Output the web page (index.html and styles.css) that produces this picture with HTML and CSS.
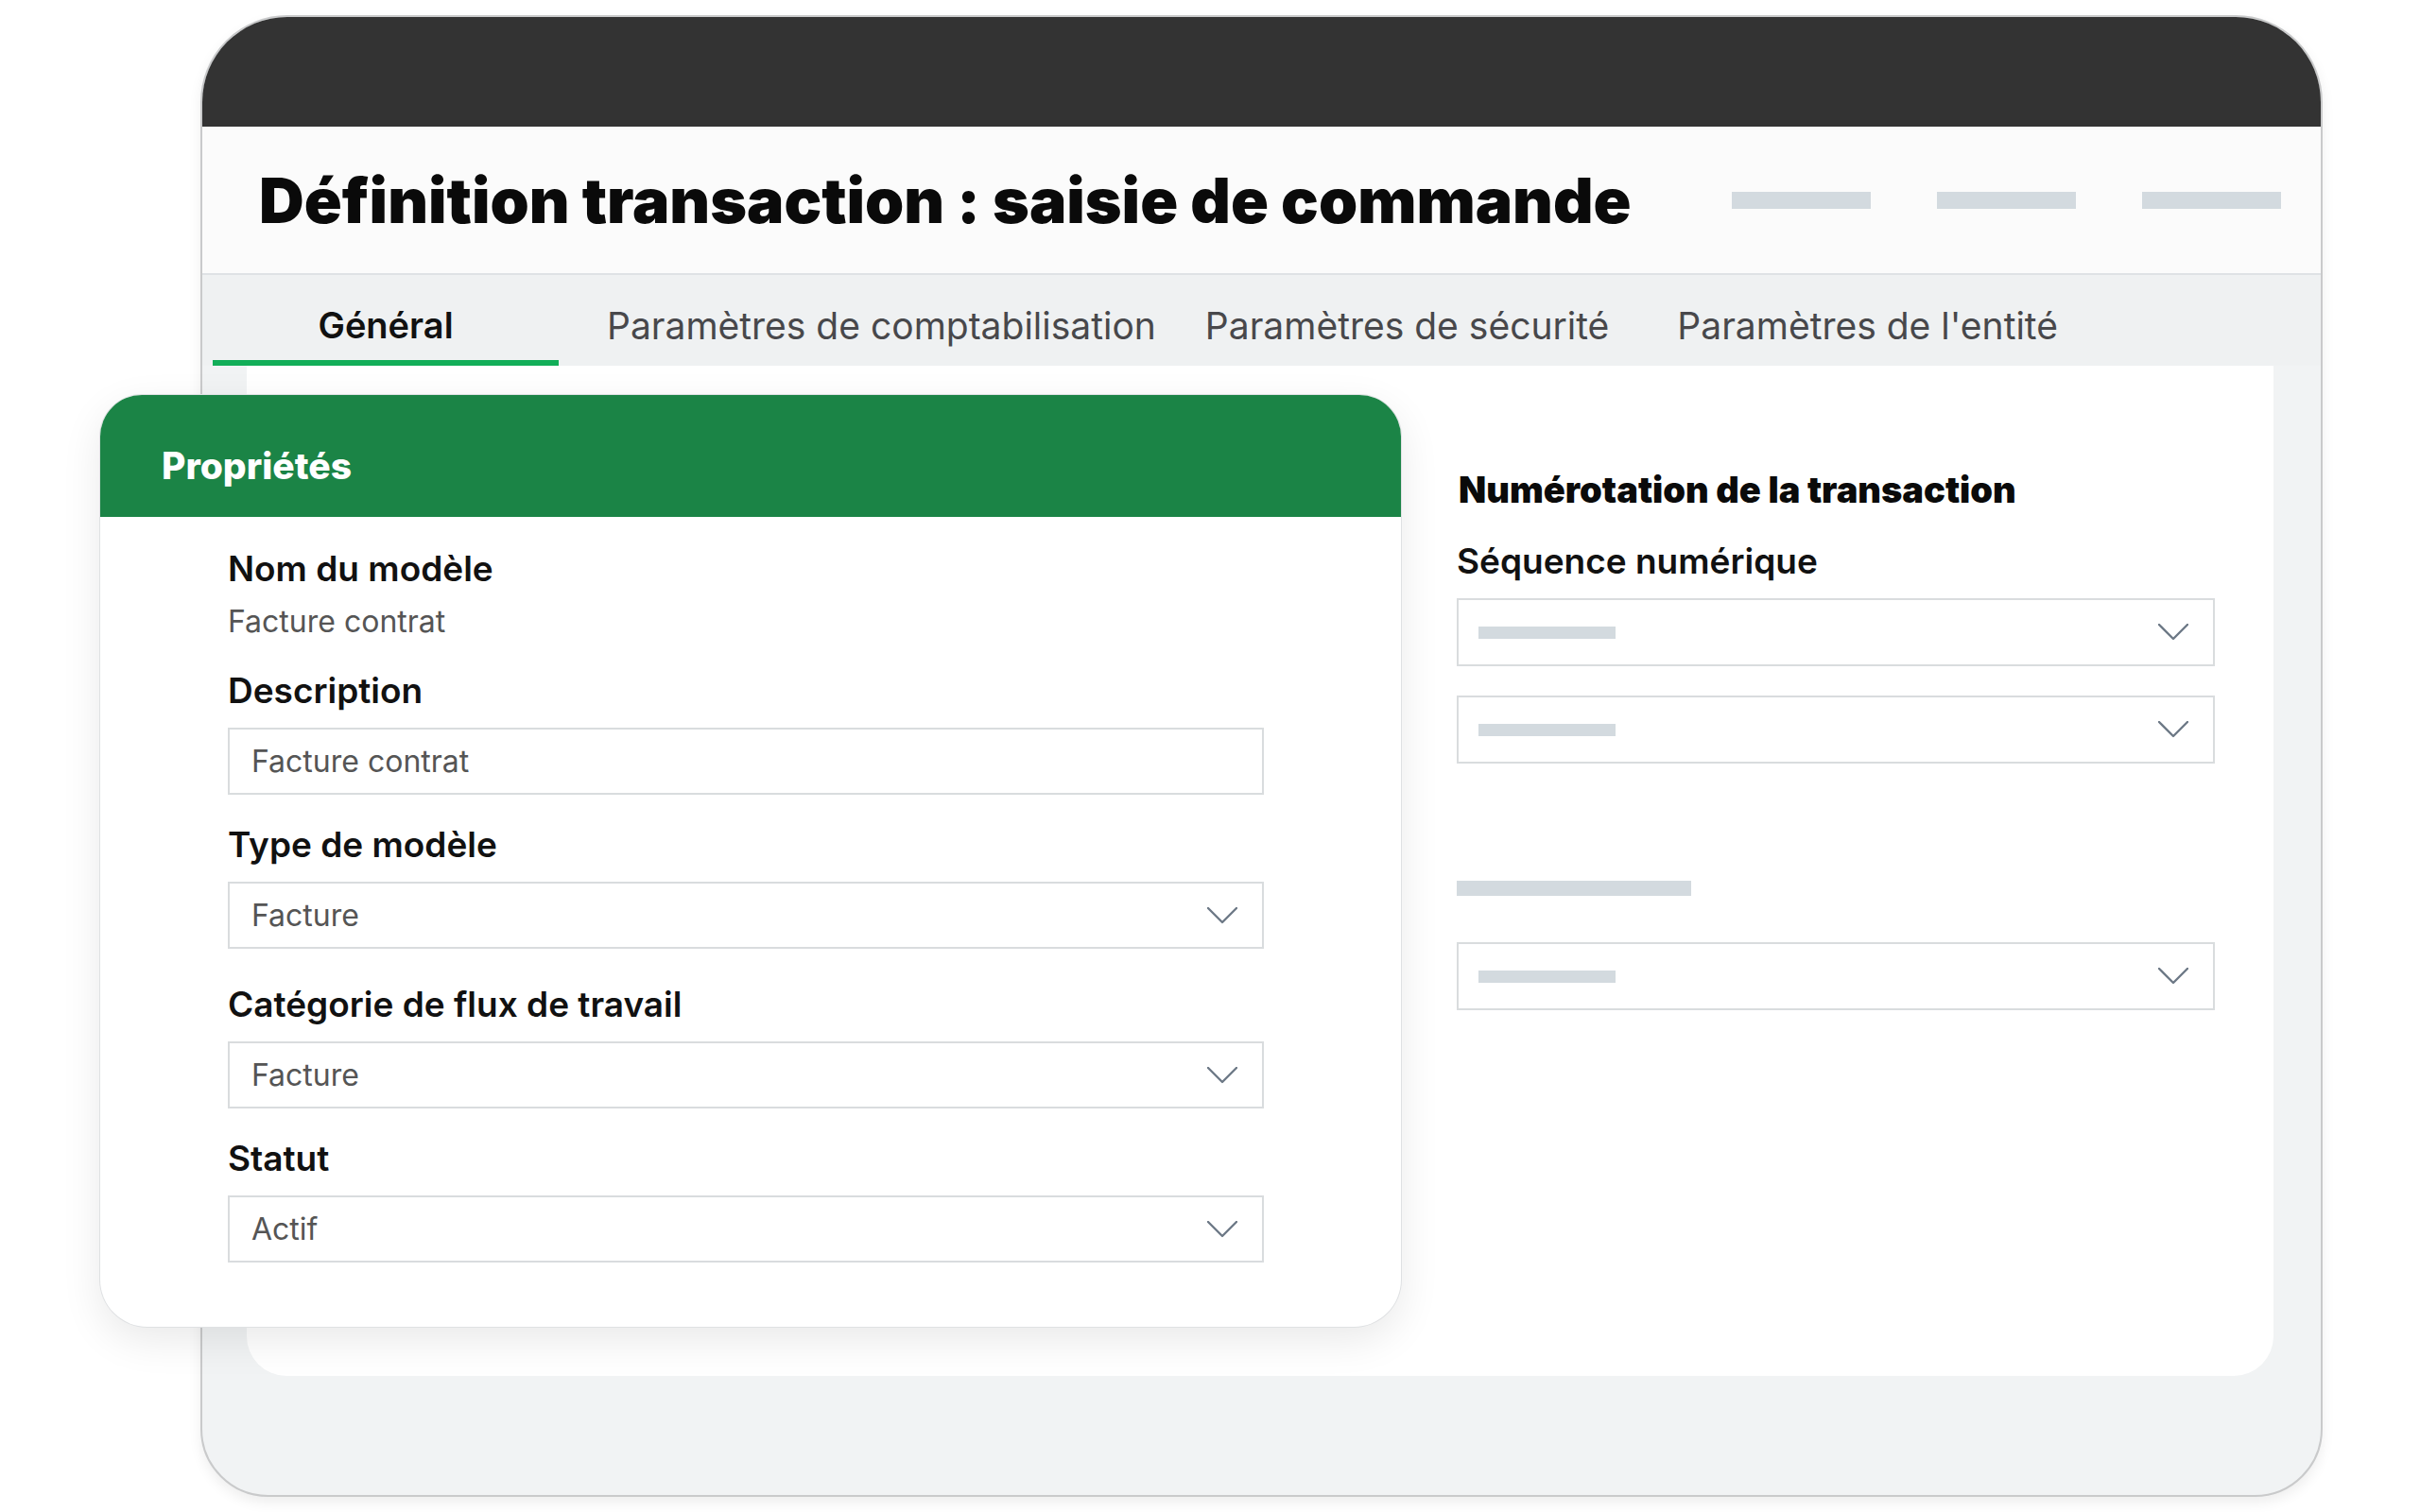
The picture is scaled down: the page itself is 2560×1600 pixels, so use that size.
FILE: index.html
```html
<!DOCTYPE html>
<html lang="fr">
<head>
<meta charset="utf-8">
<title>Définition transaction : saisie de commande</title>
<link rel="stylesheet" href="styles.css">
</head>
<body>
<div class="stage">
  <div class="device">
    <div class="topbar"></div>
    <header class="header">
      <h1 class="title">Définition transaction : saisie de commande</h1>
      <div class="header-ph">
        <span class="ph ph-head"></span>
        <span class="ph ph-head"></span>
        <span class="ph ph-head"></span>
      </div>
    </header>
    <nav class="tabs">
      <div class="tab tab-active">Général</div>
      <div class="tab tab-2">Paramètres de comptabilisation</div>
      <div class="tab tab-3">Paramètres de sécurité</div>
      <div class="tab tab-4">Paramètres de l'entité</div>
    </nav>
    <main class="content">
      <div class="content-left"></div>
      <section class="numbering">
        <h2 class="num-title">Numérotation de la transaction</h2>
        <div class="field-label">Séquence numérique</div>
        <div class="select select-gap">
          <span class="ph ph-inner"></span>
          <svg class="chev" viewBox="0 0 32 18" width="32" height="18"><polyline points="1,1 16,16 31,1" /></svg>
        </div>
        <div class="select">
          <span class="ph ph-inner"></span>
          <svg class="chev" viewBox="0 0 32 18" width="32" height="18"><polyline points="1,1 16,16 31,1" /></svg>
        </div>
        <span class="ph ph-label"></span>
        <div class="select">
          <span class="ph ph-inner"></span>
          <svg class="chev" viewBox="0 0 32 18" width="32" height="18"><polyline points="1,1 16,16 31,1" /></svg>
        </div>
      </section>
    </main>
  </div>

  <section class="card">
    <div class="card-head">Propriétés</div>
    <div class="card-body">
      <div class="field-label">Nom du modèle</div>
      <div class="static-value">Facture contrat</div>

      <div class="field-label field-next">Description</div>
      <div class="box">Facture contrat</div>

      <div class="field-label field-next">Type de modèle</div>
      <div class="box box-select">
        <span>Facture</span>
        <svg class="chev" viewBox="0 0 32 18" width="32" height="18"><polyline points="1,1 16,16 31,1" /></svg>
      </div>

      <div class="field-label field-next field-wide">Catégorie de flux de travail</div>
      <div class="box box-select">
        <span>Facture</span>
        <svg class="chev" viewBox="0 0 32 18" width="32" height="18"><polyline points="1,1 16,16 31,1" /></svg>
      </div>

      <div class="field-label field-next">Statut</div>
      <div class="box box-select">
        <span>Actif</span>
        <svg class="chev" viewBox="0 0 32 18" width="32" height="18"><polyline points="1,1 16,16 31,1" /></svg>
      </div>
    </div>
  </section>
</div>
</body>
</html>
```

FILE: styles.css
```css
html, body {
  margin: 0;
  padding: 0;
  background: #ffffff;
}

body {
  font-family: Inter, Roboto, "Liberation Sans", Arial, sans-serif;
  color: #111;
}

.stage {
  position: relative;
  box-sizing: border-box;
  width: 2560px;
  height: 1600px;
  padding: 16px 0 0 212px;
  overflow: hidden;
}

/* ---------- device frame ---------- */
.device {
  box-sizing: border-box;
  width: 2245px;
  height: 1568px;
  border: 2px solid #c9cacb;
  border-radius: 92px 92px 72px 72px;
  background: #f1f3f4;
  overflow: hidden;
  display: flex;
  flex-direction: column;
  box-shadow: 0 6px 14px rgba(0, 0, 0, 0.07);
}

.topbar {
  flex: none;
  height: 116px;
  background: #333333;
}

.header {
  flex: none;
  box-sizing: border-box;
  height: 157px;
  background: #fbfbfb;
  border-bottom: 2px solid #dfe2e5;
  display: flex;
  align-items: center;
  padding: 0 42px 0 60px;
}

.title {
  margin: 0;
  font-size: 66px;
  font-weight: 900;
  letter-spacing: 0;
  color: #0a0a0a;
  white-space: nowrap;
}

.header-ph {
  margin-left: auto;
  display: flex;
  gap: 70px;
}

.ph {
  display: block;
  background: #d3dadf;
}

.ph-head {
  width: 147px;
  height: 18px;
}

/* ---------- tabs ---------- */
.tabs {
  flex: none;
  height: 96px;
  background: #eff1f2;
  display: flex;
  padding-left: 11px;
}

.tab {
  box-sizing: border-box;
  display: flex;
  align-items: center;
  padding-top: 16px;
  border-bottom: 6px solid transparent;
  font-size: 39px;
  color: #48484b;
  white-space: nowrap;
}

.tab-active {
  width: 366px;
  justify-content: center;
  border-bottom-color: #12ae58;
  color: #111;
  font-weight: 600;
  font-size: 38px;
}

.tab-2 { margin-left: 51px; }
.tab-3 { margin-left: 52px; }
.tab-4 { margin-left: 72px; }

/* ---------- content ---------- */
.content {
  flex: none;
  height: 1069px;
  margin: 0 50px 0 47px;
  background: #ffffff;
  border-radius: 0 0 42px 42px;
  display: grid;
  grid-template-columns: 1280px 802px;
}

.numbering {
  padding-top: 107px;
}

.num-title {
  margin: 0 0 27px 2px;
  font-size: 38px;
  line-height: 48px;
  font-weight: 900;
  letter-spacing: 0;
  color: #0a0a0a;
  white-space: nowrap;
}

.field-label {
  font-size: 37px;
  line-height: 50px;
  font-weight: 600;
  color: #111;
  white-space: nowrap;
}

.select {
  box-sizing: border-box;
  height: 72px;
  border: 2px solid #d9dcde;
  background: #fff;
  display: flex;
  align-items: center;
  justify-content: space-between;
  padding: 0 26px 0 21px;
  margin-top: 31px;
}

.select-gap {
  margin-top: 14px;
}

.ph-inner {
  width: 145px;
  height: 13px;
}

.ph-label {
  width: 248px;
  height: 16px;
  margin-top: 124px;
}

.ph-label + .select {
  margin-top: 49px;
}

.chev {
  display: block;
  flex: none;
}

.chev polyline {
  fill: none;
  stroke: #6d7986;
  stroke-width: 2.4;
  stroke-linecap: round;
  stroke-linejoin: round;
}

/* ---------- properties card ---------- */
.card {
  position: absolute;
  left: 106px;
  top: 418px;
  width: 1376px;
  height: 986px;
  box-sizing: border-box;
  background: #ffffff;
  border-radius: 44px 44px 50px 50px;
  overflow: hidden;
  box-shadow: 0 0 0 1px #dfe1e3, 0 14px 44px rgba(0, 0, 0, 0.09);
}

.card-head {
  box-sizing: border-box;
  height: 129px;
  background: #1b8446;
  color: #ffffff;
  font-size: 39px;
  font-weight: 800;
  display: flex;
  align-items: center;
  padding: 20px 0 0 65px;
}

.card-body {
  padding: 30px 0 0 135px;
}

.static-value {
  margin-top: 11px;
  font-size: 32px;
  line-height: 40px;
  color: #555;
}

.field-next {
  margin-top: 28px;
}

.field-wide {
  margin-top: 34px;
}

.box {
  box-sizing: border-box;
  width: 1096px;
  height: 71px;
  margin-top: 14px;
  border: 2px solid #d9dcde;
  background: #fff;
  display: flex;
  align-items: center;
  padding: 0 26px 0 23px;
  font-size: 32px;
  color: #555;
}

.box-select {
  justify-content: space-between;
}
```
